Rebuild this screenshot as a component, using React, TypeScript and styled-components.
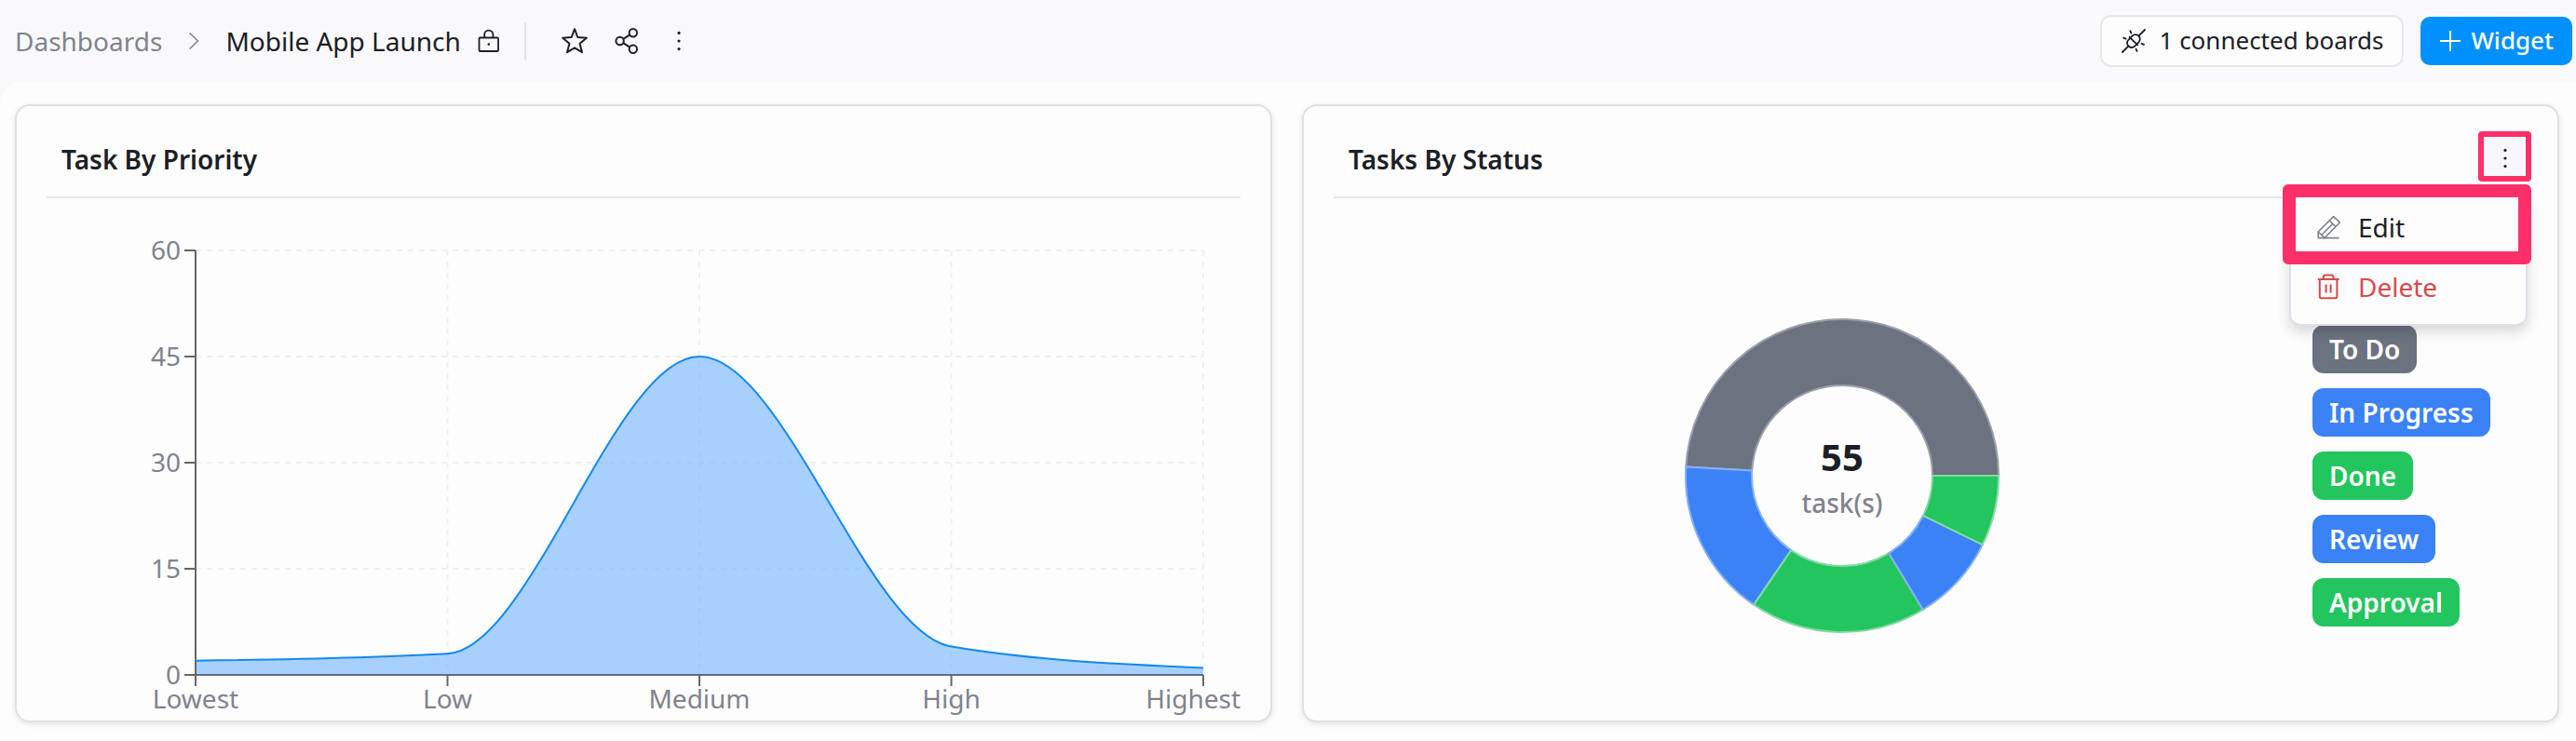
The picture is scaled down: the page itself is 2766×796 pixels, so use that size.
import React, { useLayoutEffect, useRef, useState } from "react";
import styled, { createGlobalStyle } from "styled-components";

const color = {
  text: "#1c2024",
  muted: "#80838d",
  line: "#e0e1e6",
  border: "#e0e0e2",
  page: "#f9f9fc",
  panel: "#fdfdfe",
  accent: "#0090ff",
  danger: "#d64a4d",
  marker: "#ff2f69",
  grey: "#6b7280",
  blue: "#3b82f6",
  green: "#22c55e",
};

const GlobalStyle = createGlobalStyle`
  * { box-sizing: border-box; }
  body {
    margin: 0;
    background: ${color.page};
    color: ${color.text};
    font-family: "Noto Sans", sans-serif;
    font-size: 28px;
    line-height: 40px;
  }
  button { font: inherit; color: inherit; cursor: pointer; }
`;

const Page = styled.div`
  display: flex;
  flex-direction: column;
  min-height: 100vh;
`;

const TopBar = styled.header`
  display: flex;
  align-items: center;
  justify-content: space-between;
  height: 88px;
  padding: 0 4px 0 16px;
`;

const BarGroup = styled.div<{ $gap: number }>`
  display: flex;
  align-items: center;
  gap: ${(p) => p.$gap}px;
`;

const Breadcrumb = styled.nav`
  display: flex;
  align-items: center;
  gap: 28px;
`;

const CrumbLink = styled.a`
  color: ${color.muted};
  text-decoration: none;
`;

const PageTitle = styled.h1`
  margin: 0;
  font-size: 28px;
  line-height: 40px;
  font-weight: 400;
`;

const Separator = styled.span`
  width: 2px;
  height: 40px;
  margin: 0 14px 0 8px;
  background: ${color.line};
`;

const IconButton = styled.button`
  display: flex;
  align-items: center;
  justify-content: center;
  width: 40px;
  height: 40px;
  padding: 0;
  border: 0;
  background: transparent;
`;

const BoardsButton = styled.button`
  display: flex;
  align-items: center;
  gap: 14px;
  height: 56px;
  padding: 0 20px;
  border: 2px solid #e8e8ec;
  border-radius: 12px;
  background: ${color.panel};
  font-size: 26px;
`;

const WidgetButton = styled.button`
  display: flex;
  align-items: center;
  gap: 10px;
  height: 52px;
  padding: 0 20px;
  border: 0;
  border-radius: 10px;
  background: ${color.accent};
  color: #fff;
  font-size: 26px;
  font-weight: 500;
`;

const ButtonLabel = styled.span`
  padding-bottom: 2px;
`;

const Panel = styled.main`
  flex: 1;
  display: grid;
  grid-template-columns: 1fr 1fr;
  align-items: start;
  gap: 32px;
  padding: 24px 18px 20px 16px;
  border-radius: 24px 0 0 0;
  background: ${color.panel};
`;

const Card = styled.section`
  min-width: 0;
  padding: 0 32px;
  border: 2px solid ${color.border};
  border-radius: 16px;
  background: ${color.panel};
  box-shadow: 0 2px 6px rgba(0, 0, 0, 0.1);
`;

const CardHeader = styled.header`
  display: flex;
  align-items: flex-start;
  justify-content: space-between;
  height: 99px;
  padding: 32px 0 0 16px;
  border-bottom: 2px solid #e6e7ea;
`;

const CardTitle = styled.h2`
  margin: 0;
  font-size: 28px;
  line-height: 50px;
  font-weight: 600;
`;

const CardBody = styled.div`
  display: flex;
  align-items: center;
  padding-top: 35px;
`;

const ChartBox = styled.div<{ $inset?: number }>`
  flex: 1;
  min-width: 0;
  height: 526px;
  margin-left: ${(p) => p.$inset ?? 0}px;

  svg { display: block; }
`;

const AxisText = styled.text`
  fill: ${color.muted};
  font-size: 28px;
`;

const TotalText = styled.text`
  fill: ${color.text};
  font-size: 40px;
  font-weight: 700;
`;

const UnitText = styled.text`
  fill: ${color.muted};
  font-size: 28px;
  font-weight: 500;
`;

const Legend = styled.ul`
  display: flex;
  flex-direction: column;
  align-items: flex-start;
  gap: 16px;
  width: 231px;
  margin: 0;
  padding: 0;
  list-style: none;
`;

const Badge = styled.li<{ $color: string }>`
  height: 52px;
  padding: 0 18px;
  border-radius: 12px;
  background: ${(p) => p.$color};
  color: #fff;
  font-weight: 600;
  line-height: 52px;
`;

const MenuAnchor = styled.div`
  position: relative;
`;

const MenuTrigger = styled(IconButton)`
  width: 48px;
  height: 48px;
  background: #f8f8fc;
`;

const Menu = styled.ul`
  position: absolute;
  z-index: 2;
  top: 100%;
  right: 0;
  width: 256px;
  margin: 10px 0 0;
  padding: 6px 0 8px;
  border: 2px solid ${color.line};
  border-radius: 12px;
  background: ${color.panel};
  box-shadow: 0 6px 14px rgba(0, 0, 0, 0.16);
  list-style: none;
`;

const MenuRow = styled.li`
  position: relative;
`;

const MenuItem = styled.button<{ $danger?: boolean }>`
  display: flex;
  align-items: center;
  gap: 18px;
  width: 100%;
  height: 64px;
  padding: 0 28px;
  border: 0;
  background: transparent;
  color: ${(p) => (p.$danger ? color.danger : color.text)};
`;

const TriggerMarker = styled.span`
  position: absolute;
  z-index: 1;
  inset: -5px -4px -1px -5px;
  border: 6px solid ${color.marker};
  border-radius: 4px;
  pointer-events: none;
`;

const ItemMarker = styled.span`
  position: absolute;
  z-index: 1;
  inset: -14px -6px -8px -9px;
  border: 14px solid ${color.marker};
  border-radius: 6px;
  pointer-events: none;
`;

function useSize() {
  const ref = useRef<HTMLDivElement>(null);
  const [size, setSize] = useState({ width: 0, height: 0 });
  useLayoutEffect(() => {
    const el = ref.current;
    if (!el) return;
    const read = () => setSize({ width: el.clientWidth, height: el.clientHeight });
    read();
    const observer = new ResizeObserver(read);
    observer.observe(el);
    return () => observer.disconnect();
  }, []);
  return [ref, size] as const;
}

type Point = { x: number; y: number };

/* Monotone cubic interpolation through evenly ordered points. */
function monotonePath(pts: Point[]) {
  const n = pts.length;
  const slope = (i: number) => (pts[i + 1].y - pts[i].y) / (pts[i + 1].x - pts[i].x);
  const tangents = pts.map(() => 0);
  for (let i = 1; i < n - 1; i++) {
    const a = slope(i - 1);
    const b = slope(i);
    const h0 = pts[i].x - pts[i - 1].x;
    const h1 = pts[i + 1].x - pts[i].x;
    const p = (a * h1 + b * h0) / (h0 + h1);
    tangents[i] = (Math.sign(a) + Math.sign(b)) * Math.min(Math.abs(a), Math.abs(b), 0.5 * Math.abs(p));
  }
  tangents[0] = (3 * slope(0) - tangents[1]) / 2;
  tangents[n - 1] = (3 * slope(n - 2) - tangents[n - 2]) / 2;
  let d = `M${pts[0].x},${pts[0].y}`;
  for (let i = 0; i < n - 1; i++) {
    const dx = (pts[i + 1].x - pts[i].x) / 3;
    d += `C${pts[i].x + dx},${pts[i].y + dx * tangents[i]},${pts[i + 1].x - dx},${pts[i + 1].y - dx * tangents[i + 1]},${pts[i + 1].x},${pts[i + 1].y}`;
  }
  return d;
}

const priorities = [
  { name: "Lowest", value: 2 },
  { name: "Low", value: 3 },
  { name: "Medium", value: 45 },
  { name: "High", value: 4 },
  { name: "Highest", value: 1 },
];
const yTicks = [0, 15, 30, 45, 60];

function AreaChart() {
  const [ref, { width }] = useSize();
  const left = 160;
  const right = width - 40;
  const top = 21;
  const bottom = 477;
  const xAt = (i: number) => left + ((right - left) * i) / (priorities.length - 1);
  const yAt = (v: number) => bottom - ((bottom - top) * v) / 60;
  const line = monotonePath(priorities.map((p, i) => ({ x: xAt(i), y: yAt(p.value) })));
  return (
    <ChartBox ref={ref}>
      {width > 0 && (
        <svg width={width} height={526} role="img" aria-label="Tasks by priority">
          <g stroke="#f0f0f2" strokeWidth="2" strokeDasharray="6 6">
            {yTicks.map((t) => (
              <line key={t} x1={left} x2={right} y1={yAt(t)} y2={yAt(t)} />
            ))}
            {priorities.map((p, i) => (
              <line key={p.name} x1={xAt(i)} x2={xAt(i)} y1={top} y2={bottom} />
            ))}
          </g>
          <path d={`${line}L${right},${bottom}L${left},${bottom}Z`} fill="#6fb2ff" fillOpacity="0.6" />
          <line x1={left} x2={right} y1={bottom} y2={bottom} stroke="#586f88" strokeWidth="2" />
          <g stroke="#666" strokeWidth="2">
            <line x1={left} x2={left} y1={top} y2={bottom} />
            {yTicks.map((t) => (
              <line key={t} x1={left - 12} x2={left} y1={yAt(t)} y2={yAt(t)} />
            ))}
            {priorities.map((p, i) => (
              <line key={p.name} x1={xAt(i)} x2={xAt(i)} y1={bottom} y2={bottom + 12} />
            ))}
          </g>
          <path d={line} fill="none" stroke="#1389ee" strokeWidth="2" />
          {yTicks.map((t) => (
            <AxisText key={t} x={left - 16} y={yAt(t) + 10} textAnchor="end">
              {t}
            </AxisText>
          ))}
          {priorities.map((p, i) => {
            const last = i === priorities.length - 1;
            return (
              <AxisText key={p.name} x={last ? width : xAt(i)} y={bottom + 36} textAnchor={last ? "end" : "middle"}>
                {p.name}
              </AxisText>
            );
          })}
        </svg>
      )}
    </ChartBox>
  );
}

const statuses = [
  { name: "To Do", value: 27, color: color.grey, edge: "#9c9fa9" },
  { name: "In Progress", value: 9, color: color.blue, edge: "#86b1f5" },
  { name: "Done", value: 10, color: color.green, edge: "#84d8a3" },
  { name: "Review", value: 5, color: color.blue, edge: "#86b1f5" },
  { name: "Approval", value: 4, color: color.green, edge: "#84d8a3" },
];
const total = statuses.reduce((sum, s) => sum + s.value, 0);

function slicePath(cx: number, cy: number, inner: number, outer: number, from: number, to: number) {
  const at = (r: number, turn: number) =>
    `${cx + r * Math.cos(turn * 2 * Math.PI)},${cy - r * Math.sin(turn * 2 * Math.PI)}`;
  const large = to - from > 0.5 ? 1 : 0;
  return `M${at(outer, from)}A${outer},${outer},0,${large},0,${at(outer, to)}L${at(inner, to)}A${inner},${inner},0,${large},1,${at(inner, from)}Z`;
}

function DonutChart() {
  const [ref, { width }] = useSize();
  const cx = Math.ceil(width / 2);
  const cy = 263;
  let start = 0;
  return (
    <ChartBox ref={ref} $inset={40}>
      {width > 0 && (
        <svg width={width} height={526} role="img" aria-label="Tasks by status">
          {statuses.map((s) => {
            const from = start / total;
            start += s.value;
            return (
              <path
                key={s.name}
                d={slicePath(cx, cy, 97, 168, from, start / total)}
                fill={s.color}
                stroke={s.edge}
                strokeWidth="2"
                strokeLinejoin="round"
              />
            );
          })}
          <TotalText x={cx} y={cy - 5} textAnchor="middle">
            {total}
          </TotalText>
          <UnitText x={cx} y={cy + 40} textAnchor="middle">
            task(s)
          </UnitText>
        </svg>
      )}
    </ChartBox>
  );
}

const Stroked = styled.svg.attrs({ fill: "none", "aria-hidden": true })<{ $muted?: boolean }>`
  flex: none;
  display: block;
  color: ${(p) => (p.$muted ? color.muted : "inherit")};
  stroke: currentColor;
`;

const ChevronIcon = () => (
  <Stroked $muted width="12" height="20" viewBox="0 0 12 20" strokeWidth="1.6">
    <path d="M1.5 1.5 10.5 10 1.5 18.5" />
  </Stroked>
);

const LockIcon = () => (
  <Stroked width="24" height="28" viewBox="0 0 24 28" strokeWidth="1.8">
    <rect x="1.5" y="10.5" width="20.5" height="14.5" rx="1" />
    <path d="M7.2 10.5V7.2a4.6 4.6 0 0 1 9.2 0V10.5" />
    <circle cx="11.8" cy="17.6" r="1.3" fill="currentColor" stroke="none" />
  </Stroked>
);

const StarIcon = () => (
  <Stroked width="30" height="30" viewBox="0 0 30 30" strokeWidth="2" strokeLinejoin="round">
    <path d="M15 2.2 18.3 11 27.8 11.7 20.6 17.8 23 27.2 15 22.3 7 27.2 9.4 17.8 2.2 11.7 11.7 11Z" />
  </Stroked>
);

const ShareIcon = () => (
  <Stroked width="30" height="30" viewBox="0 0 30 30" strokeWidth="2">
    <circle cx="7.6" cy="15" r="4.2" />
    <circle cx="21.8" cy="6.2" r="4.2" />
    <circle cx="21.8" cy="23.8" r="4.2" />
    <path d="M11.2 12.8 18.2 8.4M11.2 17.2 18.2 21.6" />
  </Stroked>
);

const DotsIcon = () => (
  <Stroked width="30" height="30" viewBox="0 0 30 30">
    <g fill="currentColor" stroke="none">
      <circle cx="15" cy="6.4" r="1.6" />
      <circle cx="15" cy="15" r="1.6" />
      <circle cx="15" cy="23.6" r="1.6" />
    </g>
  </Stroked>
);

const PlugIcon = () => (
  <Stroked width="28" height="28" viewBox="0 0 28 28" strokeWidth="1.8" strokeLinecap="round">
    <path d="M2 26 8.6 19.4M19.4 8.6 26 2" />
    <path d="M8.4 12.8 12.6 8.6a4.8 4.8 0 0 1 6.8 0 4.8 4.8 0 0 1 0 6.8L15.2 19.6a4.8 4.8 0 0 1-6.8 0 4.8 4.8 0 0 1 0-6.8Z" />
    <path d="M9.6 9.8 18.2 18.4" />
    <path d="M10.4 3.2 11.4 5.6M3.2 10.6 5.6 11.6M22.6 16.8 25 17.8M16.6 22.6 17.6 25" />
  </Stroked>
);

const PlusIcon = () => (
  <Stroked width="24" height="24" viewBox="0 0 24 24" strokeWidth="1.8">
    <path d="M12 1V23M1 12H23" />
  </Stroked>
);

const PencilIcon = () => (
  <Stroked $muted width="26" height="26" viewBox="0 0 26 26" strokeWidth="1.6" strokeLinejoin="round">
    <path d="M1.2 18 17.6 1.6 24.4 8 8 24.6H1.2Z" />
    <path d="M13.2 6 20.2 12.6M1.2 18 8 24.6M5 21.2 16.8 9.4M7 24.6H23.6" />
  </Stroked>
);

const TrashIcon = () => (
  <Stroked width="26" height="28" viewBox="0 0 26 28" strokeWidth="2" strokeLinejoin="round">
    <path d="M0.8 6H23.6M2.8 6V24.6a1.6 1.6 0 0 0 1.6 1.6H19.8a1.6 1.6 0 0 0 1.6-1.6V6" />
    <path d="M6.8 6V3.8A2.2 2.2 0 0 1 9 1.6H15.4A2.2 2.2 0 0 1 17.6 3.8V6M9.6 11.6V20.6M14.6 11.6V20.6" />
  </Stroked>
);

export default function App() {
  return (
    <>
      <GlobalStyle />
      <Page>
        <TopBar>
          <BarGroup $gap={18}>
            <Breadcrumb aria-label="Breadcrumb">
              <CrumbLink href="#dashboards">Dashboards</CrumbLink>
              <ChevronIcon />
              <PageTitle>Mobile App Launch</PageTitle>
            </Breadcrumb>
            <LockIcon />
            <Separator />
            <BarGroup $gap={16}>
              <IconButton type="button" aria-label="Add to favourites">
                <StarIcon />
              </IconButton>
              <IconButton type="button" aria-label="Share">
                <ShareIcon />
              </IconButton>
              <IconButton type="button" aria-label="More options">
                <DotsIcon />
              </IconButton>
            </BarGroup>
          </BarGroup>
          <BarGroup $gap={18}>
            <BoardsButton type="button">
              <PlugIcon />
              <ButtonLabel>1 connected boards</ButtonLabel>
            </BoardsButton>
            <WidgetButton type="button">
              <PlusIcon />
              <ButtonLabel>Widget</ButtonLabel>
            </WidgetButton>
          </BarGroup>
        </TopBar>
        <Panel>
          <Card>
            <CardHeader>
              <CardTitle>Task By Priority</CardTitle>
            </CardHeader>
            <CardBody>
              <AreaChart />
            </CardBody>
          </Card>
          <Card>
            <CardHeader>
              <CardTitle>Tasks By Status</CardTitle>
              <MenuAnchor>
                <MenuTrigger type="button" aria-label="Widget menu" aria-expanded="true">
                  <DotsIcon />
                </MenuTrigger>
                <TriggerMarker />
                <Menu>
                  <MenuRow>
                    <MenuItem type="button">
                      <PencilIcon />
                      Edit
                    </MenuItem>
                    <ItemMarker />
                  </MenuRow>
                  <MenuRow>
                    <MenuItem type="button" $danger>
                      <TrashIcon />
                      Delete
                    </MenuItem>
                  </MenuRow>
                </Menu>
              </MenuAnchor>
            </CardHeader>
            <CardBody>
              <DonutChart />
              <Legend>
                {statuses.map((s) => (
                  <Badge key={s.name} $color={s.color}>
                    {s.name}
                  </Badge>
                ))}
              </Legend>
            </CardBody>
          </Card>
        </Panel>
      </Page>
    </>
  );
}
